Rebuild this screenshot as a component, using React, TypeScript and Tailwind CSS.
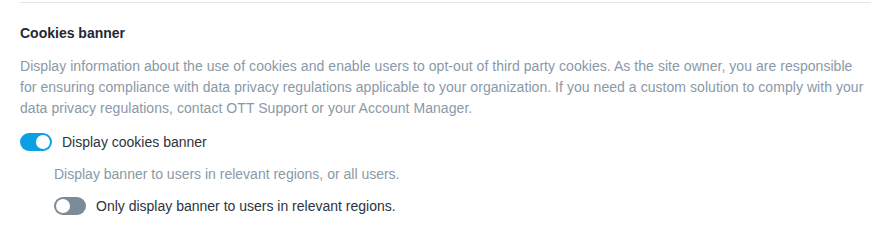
import React from "react";

function Toggle({ on }: { on: boolean }) {
  return (
    <div
      className={
        on
          ? "relative w-[32px] h-[18px] rounded-full bg-[#0ba0e3] shrink-0"
          : "relative w-[32px] h-[18px] rounded-full bg-[#7b8b97] shrink-0"
      }
    >
      <div
        className={
          on
            ? "absolute top-[2px] right-[2px] w-[14px] h-[14px] rounded-full bg-white"
            : "absolute top-[2px] left-[2px] w-[14px] h-[14px] rounded-full bg-white"
        }
      />
    </div>
  );
}

export default function App() {
  return (
    <div className="w-[882px] h-[240px] bg-white pl-5 pr-[11px] font-['Liberation_Sans',Arial,sans-serif]">
      <div className="pt-[2px]">
        <div className="h-px bg-[#dfe6e9]" />
      </div>
      <div className="mt-[20px] text-[14px] leading-[20px] font-bold text-[#1f2933]">Cookies banner</div>
      <p className="mt-[13px] text-[14px] leading-[21px] tracking-[0.05px] text-[#8a99a7]">
        Display information about the use of cookies and enable users to opt-out of third party cookies. As the site owner, you are responsible for ensuring compliance with data privacy regulations applicable to your organization. If you need a custom solution to comply with your data privacy regulations, contact OTT Support or your Account Manager.
      </p>
      <div className="mt-[13px] flex items-center gap-[10px]">
        <Toggle on />
        <span className="text-[14px] leading-[20px] text-[#2c3440]">Display cookies banner</span>
      </div>
      <div className="pl-[34px]">
        <div className="mt-[12px] text-[14px] leading-[20px] text-[#8a99a7]">
          Display banner to users in relevant regions, or all users.
        </div>
        <div className="mt-[12px] flex items-center gap-[10px]">
          <Toggle on={false} />
          <span className="text-[14px] leading-[20px] text-[#2c3440]">Only display banner to users in relevant regions.</span>
        </div>
      </div>
    </div>
  );
}
